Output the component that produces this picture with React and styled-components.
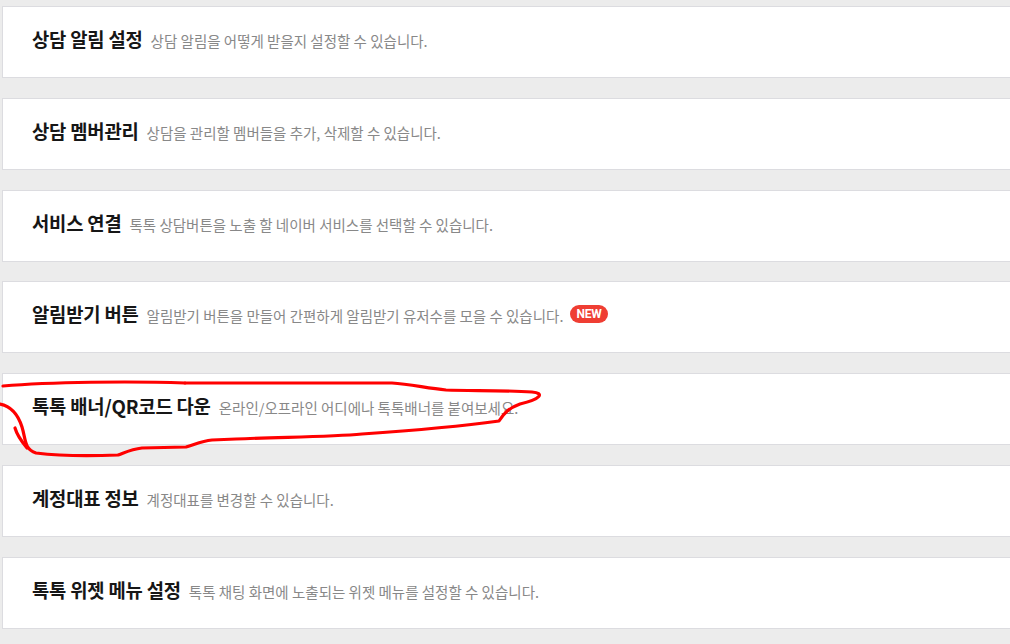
import React from 'react';
import styled, { createGlobalStyle } from 'styled-components';

const GlobalStyle = createGlobalStyle`
  html, body {
    margin: 0;
    padding: 0;
    background: #ececec;
  }
  body {
    font-family: "Noto Sans CJK KR", "Noto Sans", sans-serif;
    overflow: hidden;
  }
`;

const Page = styled.div`
  position: relative;
  padding: 6px 0 0 2px;
  overflow: hidden;
  height: 644px;
  box-sizing: border-box;
`;

const List = styled.ul`
  list-style: none;
  margin: 0 -20px 0 0;
  padding: 0;
  display: flex;
  flex-direction: column;
  gap: 19.8px;
`;

const Card = styled.li`
  box-sizing: border-box;
  height: 72px;
  background: #fff;
  border: 1px solid #dcdce0;
  display: flex;
  align-items: center;
  padding: 0 0 7px 29px;
`;

const Line = styled.div`
  display: flex;
  align-items: baseline;
  gap: 8px;
  white-space: nowrap;
`;

const Title = styled.strong`
  font-size: 18.8px;
  font-weight: 700;
  color: #161616;
  letter-spacing: -0.2px;
`;

const Desc = styled.span`
  font-size: 14.5px;
  color: #888;
`;

const NewBadge = styled.span`
  align-self: center;
  display: inline-flex;
  align-items: center;
  justify-content: center;
  height: 18px;
  padding: 0 6px;
  margin-left: -1px;
  border-radius: 9px;
  background: #ef3e33;
  color: #fff;
  font-family: "Liberation Sans Narrow", "Roboto", sans-serif;
  font-size: 12px;
  font-weight: 700;
  letter-spacing: -0.2px;
`;

const Scribble = styled.svg`
  position: absolute;
  left: 0;
  top: 0;
  pointer-events: none;
`;

const items = [
  { title: '상담 알림 설정', desc: '상담 알림을 어떻게 받을지 설정할 수 있습니다.' },
  { title: '상담 멤버관리', desc: '상담을 관리할 멤버들을 추가, 삭제할 수 있습니다.' },
  { title: '서비스 연결', desc: '톡톡 상담버튼을 노출 할 네이버 서비스를 선택할 수 있습니다.' },
  { title: '알림받기 버튼', desc: '알림받기 버튼을 만들어 간편하게 알림받기 유저수를 모을 수 있습니다.', isNew: true },
  { title: '톡톡 배너/QR코드 다운', desc: '온라인/오프라인 어디에나 톡톡배너를 붙여보세요.' },
  { title: '계정대표 정보', desc: '계정대표를 변경할 수 있습니다.' },
  { title: '톡톡 위젯 메뉴 설정', desc: '톡톡 채팅 화면에 노출되는 위젯 메뉴를 설정할 수 있습니다.' },
];

export default function App() {
  return (
    <>
      <GlobalStyle />
      <Page>
        <List>
          {items.map((item, index) => (
            <Card key={index}>
              <Line>
                <Title>{item.title}</Title>
                <Desc>{item.desc}</Desc>
                {item.isNew && <NewBadge>NEW</NewBadge>}
              </Line>
            </Card>
          ))}
        </List>

        {/* red hand-drawn mark around the banner row */}
        <Scribble width="1010" height="644" viewBox="0 0 1010 644">
          <g fill="none" stroke="#ff0000" strokeWidth="3.2" strokeLinecap="round" strokeLinejoin="round">
            <path d="M 185 383 C 130 381, 50 382, 3 386" />
            <path d="M 0 404 C 10 406, 18 414, 22 427 C 26 440, 24 449, 36 453 C 60 456, 95 456, 118 455 C 126 452, 132 449, 142 448 L 186 447 C 196 444, 202 441, 212 440 L 236 439 C 280 437, 330 437, 362 434 C 420 430, 470 425, 499 421 C 504 413, 509 408, 520 404 C 541 399, 545 393, 532 392 C 502 390, 470 391, 446 390 C 426 388, 410 384, 392 383 L 185 383" />
            <path d="M 15 428 C 17 435, 22 442, 27 448" />
          </g>
        </Scribble>
      </Page>
    </>
  );
}
